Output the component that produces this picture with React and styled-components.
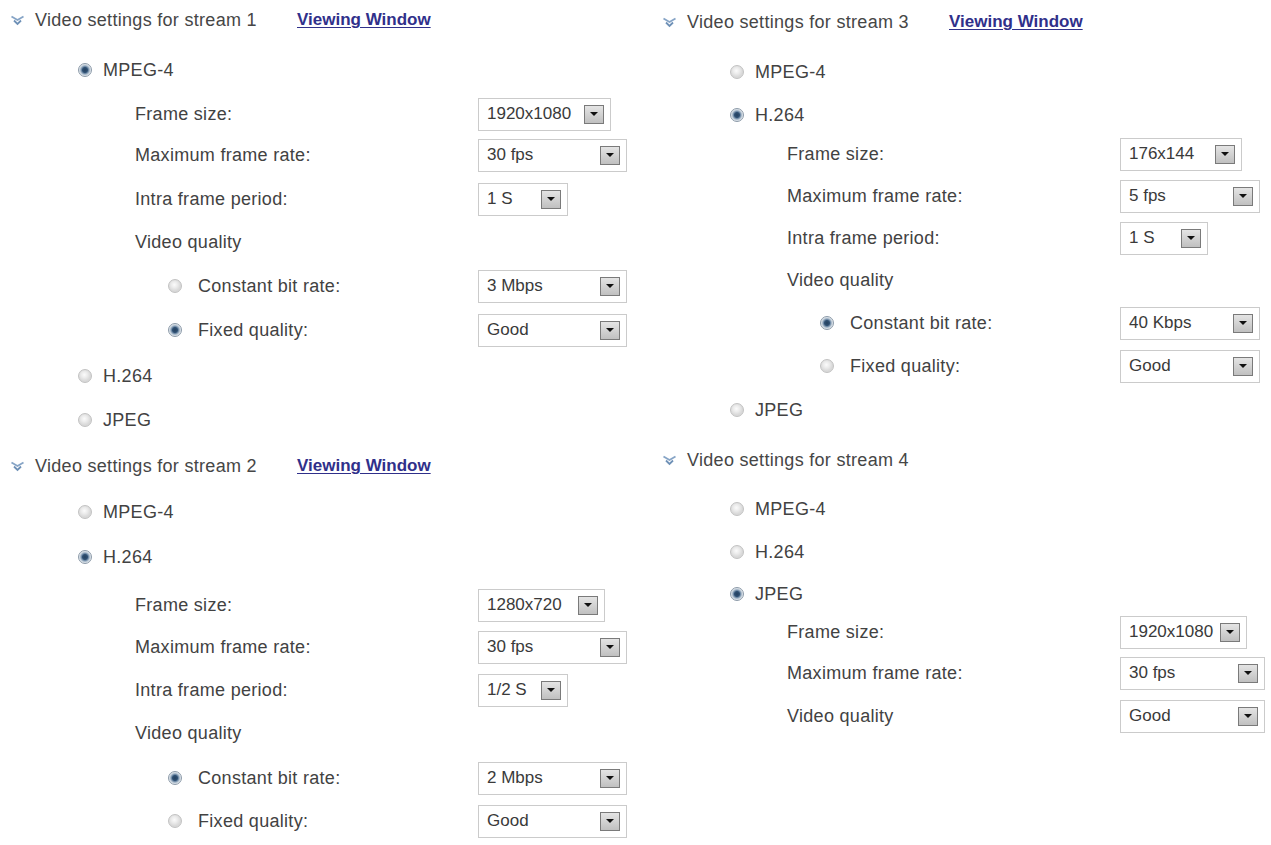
import React from "react";
import styled, { createGlobalStyle } from "styled-components";

const GlobalStyle = createGlobalStyle`
  html, body { margin: 0; padding: 0; background: #ffffff; }
  body {
    font-family: "Liberation Sans", Arial, Helvetica, sans-serif;
    color: #424242;
  }
`;

const Page = styled.div`
  width: 1271px;
  height: 845px;
  overflow: hidden;
  display: grid;
  grid-template-columns: 652px 1fr;
  background: #ffffff;
`;

const Column = styled.div`
  display: flex;
  flex-direction: column;
  padding-top: ${(p) => p.$top}px;
`;

const RowBase = styled.div`
  height: 34px;
  margin-top: ${(p) => p.$mt}px;
  font-size: 18px;
  letter-spacing: 0.3px;
  color: #424242;
`;

const HeaderRow = styled(RowBase)`
  display: grid;
  grid-template-columns: 297px auto;
  align-items: center;
`;

const HeaderTitle = styled.div`
  display: flex;
  align-items: center;
  gap: 10px;
  padding-left: 10px;
  color: #464646;
`;

const Link = styled.a`
  font-size: 17px;
  letter-spacing: 0;
  font-weight: bold;
  color: #30308a;
  text-decoration: underline;
  text-underline-offset: 2px;
  cursor: pointer;
`;

const OptionRow = styled(RowBase)`
  display: flex;
  align-items: center;
  padding-left: ${(p) => p.$indent}px;
`;

const FieldRow = styled(RowBase)`
  display: grid;
  grid-template-columns: ${(p) => p.$selectX}px auto;
  align-items: center;
`;

const LabelCell = styled.div`
  display: flex;
  align-items: center;
  padding-left: ${(p) => p.$indent}px;
`;

const Radio = styled.span`
  flex: none;
  width: 14px;
  height: 14px;
  border-radius: 50%;
  box-sizing: border-box;
  margin-right: ${(p) => p.$gap}px;
  border: 1px solid ${(p) => (p.$checked ? "#8c9aa8" : "#c2c2c2")};
  background: ${(p) =>
    p.$checked
      ? "radial-gradient(circle at 50% 50%, #24405e 0, #2f5073 2.5px, #6f8aa6 3.5px, #c4d0db 5px, #e6ebf0 6px)"
      : "radial-gradient(circle at 45% 40%, #fbfbfb 0, #ececec 3px, #d9d9d9 6px)"};
`;

const Select = styled.div`
  box-sizing: border-box;
  width: ${(p) => p.$w}px;
  height: 33px;
  display: flex;
  align-items: center;
  border: 1px solid #cbcbcb;
  background: #ffffff;
  padding: 0 6px 0 8px;
  font-size: 17px;
  letter-spacing: 0;
  color: #3a3a3a;
`;

const SelectText = styled.span`
  flex: 1;
  white-space: nowrap;
`;

const DropButton = styled.span`
  flex: none;
  width: 20px;
  height: 19px;
  box-sizing: border-box;
  border: 1px solid #7a7a7a;
  background: linear-gradient(#e4e4e4, #c0c0c0);
  display: flex;
  align-items: center;
  justify-content: center;
  &::after {
    content: "";
    width: 0;
    height: 0;
    border-left: 4px solid transparent;
    border-right: 4px solid transparent;
    border-top: 4px solid #111;
  }
`;

const Arrow = () => (
  <svg width="15" height="11" viewBox="0 0 15 11" aria-hidden="true">
    <polyline points="1.5,1.5 7.5,5 13.5,1.5" fill="none" stroke="#86a4c6" strokeWidth="1.8" />
    <polyline points="4,5.5 7.5,9 11,5.5" fill="none" stroke="#6f91b7" strokeWidth="1.8" />
  </svg>
);

const Dropdown = ({ value, w }) => (
  <Select $w={w}>
    <SelectText>{value}</SelectText>
    <DropButton />
  </Select>
);

const left = [
  { t: "header", title: "Video settings for stream 1", link: true, mt: 0 },
  { t: "option", label: "MPEG-4", checked: true, mt: 16 },
  { t: "field", label: "Frame size:", value: "1920x1080", w: 133, mt: 10 },
  { t: "field", label: "Maximum frame rate:", value: "30 fps", w: 149, mt: 7 },
  { t: "field", label: "Intra frame period:", value: "1 S", w: 90, mt: 10 },
  { t: "text", label: "Video quality", mt: 9 },
  { t: "sub", label: "Constant bit rate:", checked: false, value: "3 Mbps", w: 149, mt: 10 },
  { t: "sub", label: "Fixed quality:", checked: true, value: "Good", w: 149, mt: 10 },
  { t: "option", label: "H.264", checked: false, mt: 12 },
  { t: "option", label: "JPEG", checked: false, mt: 10 },
  { t: "header", title: "Video settings for stream 2", link: true, mt: 12 },
  { t: "option", label: "MPEG-4", checked: false, mt: 12 },
  { t: "option", label: "H.264", checked: true, mt: 11 },
  { t: "field", label: "Frame size:", value: "1280x720", w: 127, mt: 14 },
  { t: "field", label: "Maximum frame rate:", value: "30 fps", w: 149, mt: 8 },
  { t: "field", label: "Intra frame period:", value: "1/2 S", w: 90, mt: 9 },
  { t: "text", label: "Video quality", mt: 9 },
  { t: "sub", label: "Constant bit rate:", checked: true, value: "2 Mbps", w: 149, mt: 11 },
  { t: "sub", label: "Fixed quality:", checked: false, value: "Good", w: 149, mt: 9 },
];

const right = [
  { t: "header", title: "Video settings for stream 3", link: true, mt: 0 },
  { t: "option", label: "MPEG-4", checked: false, mt: 16 },
  { t: "option", label: "H.264", checked: true, mt: 9 },
  { t: "field", label: "Frame size:", value: "176x144", w: 122, mt: 5 },
  { t: "field", label: "Maximum frame rate:", value: "5 fps", w: 140, mt: 8 },
  { t: "field", label: "Intra frame period:", value: "1 S", w: 88, mt: 8 },
  { t: "text", label: "Video quality", mt: 8 },
  { t: "sub", label: "Constant bit rate:", checked: true, value: "40 Kbps", w: 140, mt: 9 },
  { t: "sub", label: "Fixed quality:", checked: false, value: "Good", w: 140, mt: 9 },
  { t: "option", label: "JPEG", checked: false, mt: 10 },
  { t: "header", title: "Video settings for stream 4", link: false, mt: 16 },
  { t: "option", label: "MPEG-4", checked: false, mt: 15 },
  { t: "option", label: "H.264", checked: false, mt: 9 },
  { t: "option", label: "JPEG", checked: true, mt: 8 },
  { t: "field", label: "Frame size:", value: "1920x1080", w: 127, mt: 4 },
  { t: "field", label: "Maximum frame rate:", value: "30 fps", w: 145, mt: 7 },
  { t: "field", label: "Video quality", value: "Good", w: 145, mt: 9 },
];

const renderRow = (r, i, selectX) => {
  switch (r.t) {
    case "header":
      return (
        <HeaderRow key={i} $mt={r.mt}>
          <HeaderTitle>
            <Arrow />
            <span>{r.title}</span>
          </HeaderTitle>
          {r.link ? <Link>Viewing Window</Link> : <span />}
        </HeaderRow>
      );
    case "option":
      return (
        <OptionRow key={i} $mt={r.mt} $indent={78}>
          <Radio $checked={r.checked} $gap={11} />
          <span>{r.label}</span>
        </OptionRow>
      );
    case "text":
      return (
        <OptionRow key={i} $mt={r.mt} $indent={135}>
          <span>{r.label}</span>
        </OptionRow>
      );
    case "field":
      return (
        <FieldRow key={i} $mt={r.mt} $selectX={selectX}>
          <LabelCell $indent={135}>{r.label}</LabelCell>
          <Dropdown value={r.value} w={r.w} />
        </FieldRow>
      );
    case "sub":
      return (
        <FieldRow key={i} $mt={r.mt} $selectX={selectX}>
          <LabelCell $indent={168}>
            <Radio $checked={r.checked} $gap={16} />
            <span>{r.label}</span>
          </LabelCell>
          <Dropdown value={r.value} w={r.w} />
        </FieldRow>
      );
    default:
      return null;
  }
};

export default function App() {
  return (
    <>
      <GlobalStyle />
      <Page>
        <Column $top={3}>{left.map((r, i) => renderRow(r, i, 478))}</Column>
        <Column $top={5}>{right.map((r, i) => renderRow(r, i, 468))}</Column>
      </Page>
    </>
  );
}
